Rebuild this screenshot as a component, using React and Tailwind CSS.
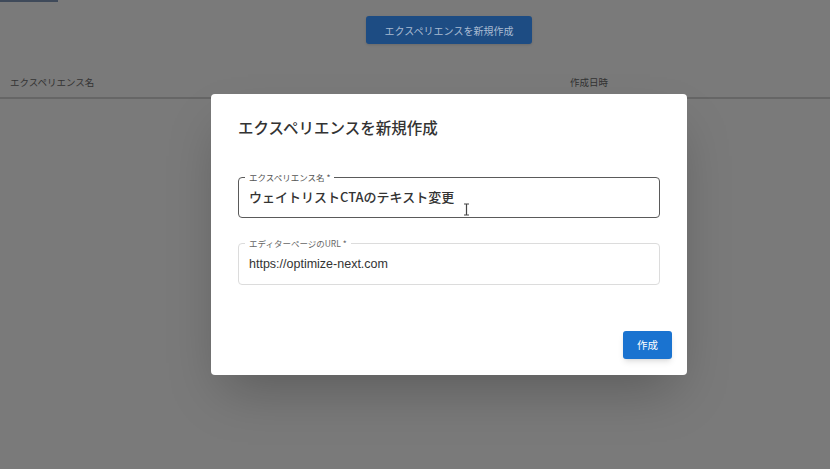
export default function App() {
  const font = { fontFamily: '"Noto Sans CJK JP", "Noto Sans", sans-serif' };
  return (
    <div className="relative w-[830px] h-[469px] overflow-hidden bg-[#7a7a7a]" style={font}>
      {/* page behind the modal */}
      <div className="h-[2px] w-[58px] bg-[#3f4a5a]" />
      <div className="flex pl-[68px] pt-[14px]">
        <div className="flex-1 flex justify-center">
          <button className="h-[28px] px-[19px] rounded-[3px] bg-[#1d4c83] text-[#a9bbd2] text-[10px] shadow-sm">
            エクスペリエンスを新規作成
          </button>
        </div>
      </div>
      <div className="flex items-center h-[30px] mt-[23px] pl-[10px] text-[9.5px] text-[#333]">
        <div className="w-[560px]">エクスペリエンス名</div>
        <div>作成日時</div>
      </div>
      <div className="h-[2px] bg-[#666]" />

      {/* modal */}
      <div className="absolute left-[211px] top-[94px] w-[476px] h-[281px] bg-white rounded-[4px] shadow-2xl flex flex-col px-[27px]">
        <h2 className="mt-[22px] text-[15.5px] font-medium text-[#333] leading-[22px]">
          エクスペリエンスを新規作成
        </h2>

        <div className="relative mt-[39px] h-[41px] rounded-[4px] border-[1.5px] border-[#5a5a5a] flex items-center px-[10px]">
          <span className="absolute -top-[7px] left-[6px] px-[4px] bg-white text-[8.5px] leading-[12px] text-[#555]">
            エクスペリエンス名 *
          </span>
          <span className="text-[13px] font-medium text-[#333] -mt-[2px]">
            ウェイトリストCTAのテキスト変更
          </span>
          <svg className="absolute left-[224px] top-[25px]" width="7" height="13" viewBox="0 0 7 13">
            <path d="M1 1h5M3.5 1v11M1 12h5" stroke="#444" strokeWidth="1.2" fill="none" />
          </svg>
        </div>

        <div className="relative mt-[25px] h-[42px] rounded-[4px] border border-[#dcdcdc] flex items-center px-[10px]">
          <span className="absolute -top-[7px] left-[6px] px-[4px] bg-white text-[8.5px] leading-[12px] text-[#666]">
            エディターページのURL *
          </span>
          <span className="text-[12.5px] text-[#333] mt-[1px]" style={{ fontFamily: '"Liberation Sans", Arial, sans-serif' }}>
            https://optimize-next.com
          </span>
        </div>

        <div className="flex-1" />
        <div className="flex justify-end mb-[16px] -mr-[12px]">
          <button className="w-[49px] h-[28px] rounded-[3px] bg-[#1a73d0] text-white text-[10.5px] shadow-md">
            作成
          </button>
        </div>
      </div>
    </div>
  );
}
